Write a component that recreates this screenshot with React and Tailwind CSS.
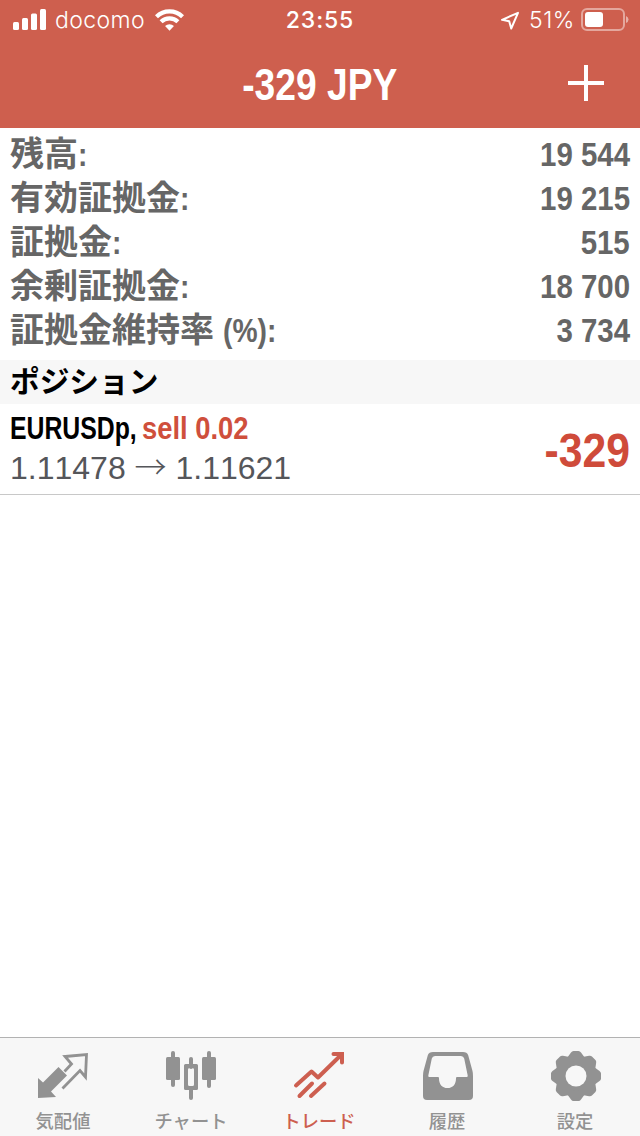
import React from 'react';

const SUMMARY = [
  { label: '残高', value: '19 544' },
  { label: '有効証拠金', value: '19 215' },
  { label: '証拠金', value: '515' },
  { label: '余剰証拠金', value: '18 700' },
  { label: '証拠金維持率', unit: '(%)', value: '3 734' },
];

function StatusBar() {
  return (
    <div className="grid h-10 grid-cols-3 items-center pl-[13px] pr-[11px] font-['Inter',sans-serif] text-[23px] text-white">
      <div className="flex items-center">
        <svg className="mb-px" width="33" height="21" viewBox="0 0 33 21" fill="currentColor">
          <rect x="0" y="13" width="6" height="8" rx="1.5" />
          <rect x="9" y="9" width="6" height="12" rx="1.5" />
          <rect x="18" y="4.5" width="6" height="16.5" rx="1.5" />
          <rect x="27" y="0" width="6" height="21" rx="1.5" />
        </svg>
        <span className="ml-[9px] pt-px font-light tracking-[0.4px]">docomo</span>
        <svg className="ml-[10px]" width="29" height="22" viewBox="0 0 30 22" fill="none" stroke="currentColor" strokeWidth="4.4">
          <path d="M1.5 7.6a19.2 19.2 0 0 1 27 0" />
          <path d="M6.3 12.9a12.4 12.4 0 0 1 17.4 0" />
          <path d="M15 22l-4.600-4.700a6.700 6.700 0 0 1 9.200 0z" fill="currentColor" stroke="none" />
        </svg>
      </div>
      <div className="pt-px pr-[2px] text-center font-medium tracking-[0.9px]">23:55</div>
      <div className="flex items-center justify-end">
        <svg className="mt-[2px]" width="20" height="20" viewBox="0 0 20 20" fill="none" stroke="currentColor" strokeWidth="2" strokeLinejoin="round">
          <path d="M2 8.800L18 1.800 11.200 17.500 9.200 10.200z" />
        </svg>
        <span className="ml-[9px] pt-px font-light tracking-[0.6px]">51%</span>
        <svg className="ml-[6px]" width="48" height="24" viewBox="0 0 48 24">
          <rect x="1" y="1" width="42" height="21" rx="5" fill="none" stroke="#fff" strokeOpacity="0.45" strokeWidth="2" />
          <rect x="4" y="4" width="18" height="15" rx="3" fill="#fff" />
          <path d="M45 8q2.500 1 2.500 3.500T45 15z" fill="#fff" fillOpacity="0.5" />
        </svg>
      </div>
    </div>
  );
}

function SummaryRow({ label, unit, value }) {
  return (
    <div className="flex h-11 items-center justify-between px-[10px] text-[34px] leading-[44px] font-bold text-[#666666]">
      <div className="flex whitespace-nowrap">
        <span className="-mt-[2px] font-['Noto_Sans_CJK_JP',sans-serif]">{label}</span>
        <span className={unit ? 'ml-[9px] origin-left scale-x-[0.83]' : 'origin-left scale-x-[0.83]'}>{unit}:</span>
      </div>
      <div className="origin-right scale-x-[0.865]">{value}</div>
    </div>
  );
}

function QuotesIcon() {
  return (
    <>
      <path d="M58.500 37l8.500 8.500-16 16 5 5.500-18 1V48l5 4.500z" fill="currentColor" />
      <path d="M64.500 41.500l7-7.500-6.500-7.500 21.500-2-1 22.500-5.500-6.500L62.500 58.500" fill="none" stroke="currentColor" strokeWidth="2.800" />
    </>
  );
}

function ChartIcon() {
  return (
    <g fill="currentColor">
      <rect x="43" y="21" width="4" height="36" rx="2" />
      <rect x="38" y="27" width="14" height="23" rx="1.5" />
      <rect x="79" y="21" width="4" height="37" rx="2" />
      <rect x="74" y="27" width="14" height="23" rx="1.5" />
      <rect x="61" y="27" width="4" height="12" rx="2" />
      <rect x="61" y="56" width="4" height="14" rx="2" />
      <path fillRule="evenodd" d="M57.500 34h11a1.500 1.500 0 0 1 1.500 1.500v23a1.500 1.500 0 0 1-1.500 1.500h-11a1.500 1.500 0 0 1-1.500-1.500v-23a1.500 1.500 0 0 1 1.500-1.500zM60 39.500v15a1.500 1.500 0 0 0 1.500 1.500h3a1.500 1.500 0 0 0 1.500-1.500v-15a1.500 1.500 0 0 0-1.500-1.500h-3a1.500 1.500 0 0 0-1.500 1.500z" />
    </g>
  );
}

function TradeIcon() {
  return (
    <g fill="none" stroke="currentColor" strokeWidth="4" strokeLinecap="round">
      <path d="M40 55.500L55.500 41.500l6.500 6L84 26" strokeLinejoin="round" />
      <path d="M77.500 24h8.500v8.500" />
      <path d="M82 24h4v4z" fill="currentColor" strokeWidth="2" />
      <path d="M56 53.500L43.500 66M68.500 53.500L55 66" />
    </g>
  );
}

function HistoryIcon() {
  return (
    <path
      fill="currentColor"
      fillRule="evenodd"
      d="M49 22h30q4 0 5.200 3.200L88.500 41q.5 2 .5 5v20q0 4-4 4H43q-4 0-4-4V46q0-3 .5-5l4.300-15.800Q45 22 49 22zM51 26q-2.500 0-3.200 2.500L44.300 45.500q-.3 1.500 1.200 1.500H54q1 0 1 1.200c0 6 3 9.800 8.500 9.800S72 54.200 72 48.200q0-1.200 1-1.200h9.500q1.500 0 1.200-1.500L80.200 28.500Q79.500 26 77 26z"
    />
  );
}

function SettingsIcon() {
  return (
    <g transform="translate(64 46)">
      <g fill="currentColor">
        <circle r="20.500" />
        {[0, 45, 90, 135].map((angle) => (
          <path
            key={angle}
            transform={`rotate(${angle})`}
            d="M-9-18L-5-23.500Q-4-25-2.500-25h5Q4-25 5-23.500L9-18V18L5 23.500Q4 25 2.500 25h-5Q-4 25-5 23.500L-9 18z"
          />
        ))}
      </g>
      <circle r="10.500" fill="#f7f7f7" />
    </g>
  );
}

const TABS = [
  { label: '気配値', Icon: QuotesIcon },
  { label: 'チャート', Icon: ChartIcon },
  { label: 'トレード', Icon: TradeIcon, active: true },
  { label: '履歴', Icon: HistoryIcon },
  { label: '設定', Icon: SettingsIcon },
];

export default function App() {
  return (
    <div className="flex h-[1136px] w-[640px] flex-col overflow-hidden bg-white font-['Liberation_Sans',Arial,sans-serif]">
      <header className="h-32 shrink-0 bg-[#ce5f4e]">
        <StatusBar />
        <div className="grid h-[88px] grid-cols-[1fr_auto_1fr] items-center text-white">
          <h1 className="col-start-2 scale-x-[0.845] pt-px text-[44px] leading-none font-bold whitespace-nowrap">-329 JPY</h1>
          <svg className="mr-9 justify-self-end" width="36" height="38" viewBox="0 0 36 38" stroke="currentColor" strokeWidth="4">
            <path d="M18 0v36M0 18h36" />
          </svg>
        </div>
      </header>

      {/* Account summary */}
      <section className="h-[232px] shrink-0 pt-1">
        {SUMMARY.map((row) => (
          <SummaryRow key={row.label} {...row} />
        ))}
      </section>

      <div className="flex h-11 shrink-0 items-center bg-[#f7f7f7] pb-[4px] pl-[10px] font-['Noto_Sans_CJK_JP',sans-serif] text-[29.700px] leading-10 font-bold text-black">
        ポジション
      </div>

      {/* Open position */}
      <div className="flex h-[91px] shrink-0 items-center justify-between border-b border-[#c8c8c8] px-[10px]">
        <div className="pb-[3px] whitespace-nowrap">
          <div className="flex text-[32px] leading-[40px] font-bold">
            <span className="w-[132px] origin-left text-black">
              <span className="inline-block origin-left scale-x-[0.775]">EURUSDp,</span>
            </span>
            <span className="origin-left scale-x-[0.855] text-[#cf4f3c]">sell 0.02</span>
          </div>
          <div className="text-[32px] leading-[40px] text-[#55565a] [font-kerning:none]">
            1.11478 <span className="font-['Noto_Sans_CJK_JP',sans-serif] font-light leading-none">→</span> 1.11621
          </div>
        </div>
        <div className="origin-right scale-x-[0.89] pt-[3px] text-[48px] font-bold text-[#cf4b3a]">-329</div>
      </div>

      <nav className="mt-auto grid h-[99px] shrink-0 grid-cols-5 border-t border-[#b2b2b2] bg-[#f7f7f7]">
        {TABS.map(({ label, Icon, active }) => (
          <div key={label} className={active ? 'flex flex-col items-center pt-[10px] text-[#cd5f50]' : 'flex flex-col items-center pt-[10px] text-[#929292]'}>
            <svg className="shrink-0" width="56" height="56" viewBox="36 18 56 56">
              <Icon />
            </svg>
            <span className="mt-[2px] mr-[2px] font-['Noto_Sans_CJK_JP',sans-serif] text-[18.300px] leading-7 font-medium whitespace-nowrap">{label}</span>
          </div>
        ))}
      </nav>
    </div>
  );
}
